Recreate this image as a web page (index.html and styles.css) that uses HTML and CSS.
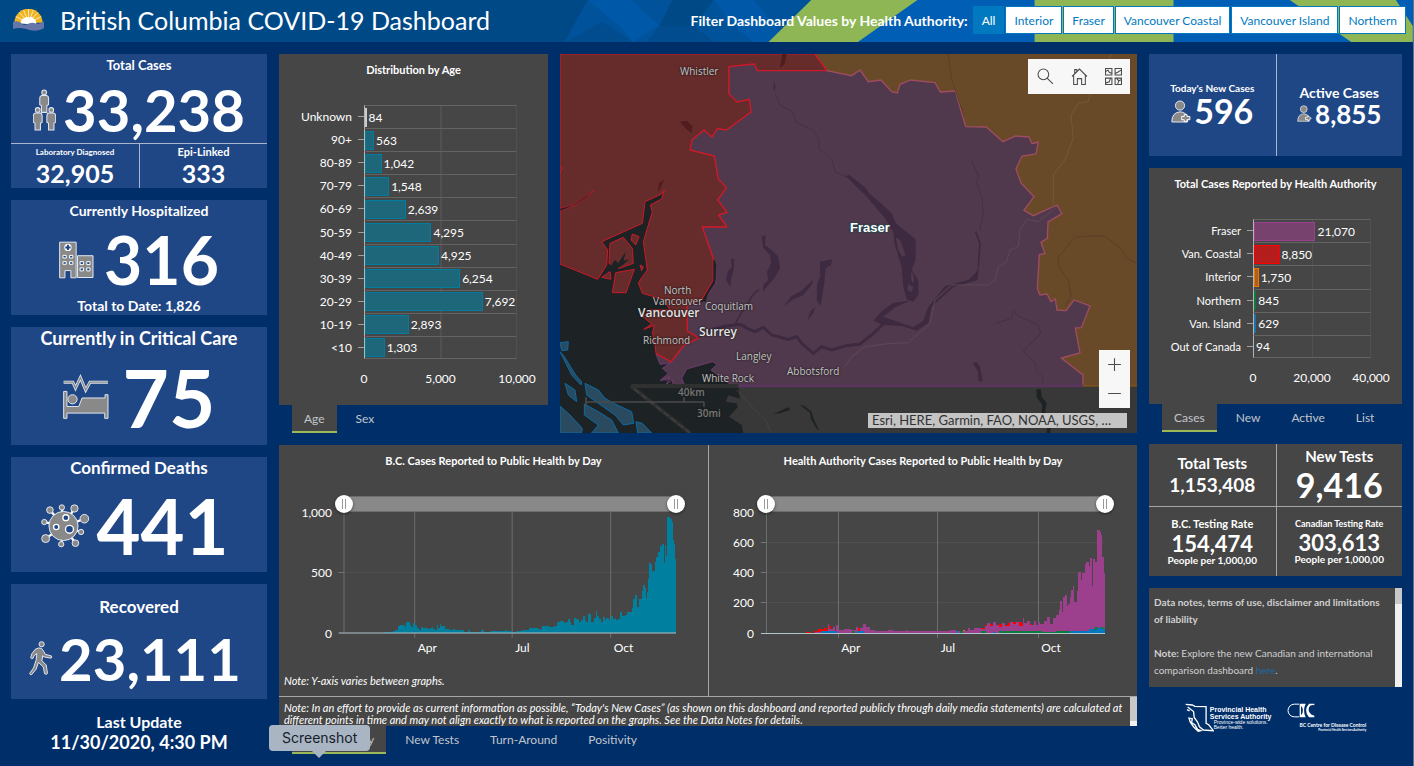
FILE: index.html
```html
<!DOCTYPE html>
<html lang="en">
<head>
    <meta charset="UTF-8">
    <meta name="viewport" content="width=device-width, initial-scale=1.0">
    <title>British Columbia COVID-19 Dashboard</title>
    <link rel="stylesheet" href="styles.css">
</head>
<body>
    <header class="header">
        <svg class="header-bg" viewBox="0 0 854 42" preserveAspectRatio="none">
            <rect width="854" height="42" fill="#005eb5"/>
            <polygon points="0,0 23,0 0,42" fill="#004987"/>
            <polygon points="23,0 248,0 205,42 0,42" fill="#00529b"/>
            <polygon points="23,0 67,0 95,26 68,42 55,26" fill="#0059a8"/>
            <polygon points="0,42 38,22 68,42" fill="#004c8e"/>
            <polygon points="108,0 150,0 130,26 95,26" fill="#004987"/>
            <polygon points="150,0 190,0 225,42 190,42 170,26" fill="#0059a8"/>
            <polygon points="95,26 130,26 150,42 82,42" fill="#004c8e"/>
            <polygon points="248,0 355,0 295,42 205,42" fill="#8eb654"/>
            <rect x="473" width="140" height="42" fill="#8eb654"/>
            <polygon points="730,0 837,0 854,26 854,42 792,42" fill="#8eb654"/>
        </svg>
        <svg class="header-logo" viewBox="0 0 90 64">
            <path d="M4 40A41 41 0 0 1 86 40Z" fill="#f0b41e"/>
            <g stroke="#fff" stroke-width="2">
                <path d="M45 40L8 22M45 40L18 10M45 40L31 3M45 40L45 0M45 40L59 3M45 40L72 10M45 40L82 22"/>
            </g>
            <path d="M22 42Q24 28 32 27Q38 20 46 25Q56 20 60 28Q68 30 68 46Z" fill="#fff"/>
            <path d="M0 38Q14 32 24 42Q34 50 46 42Q56 38 66 42Q76 46 90 36V56Q70 68 46 60Q22 52 0 58Z" fill="#6676a8"/>
        </svg>
        <h1>British Columbia COVID-19 Dashboard</h1>
        <div class="filter">
            <span class="filter-label">Filter Dashboard Values by Health Authority:</span>
            <button class="filter-btn active">All</button>
            <button class="filter-btn">Interior</button>
            <button class="filter-btn">Fraser</button>
            <button class="filter-btn">Vancouver Coastal</button>
            <button class="filter-btn">Vancouver Island</button>
            <button class="filter-btn">Northern</button>
        </div>
    </header>

    <main class="dashboard">
        <!-- Left column -->
        <section class="column">
            <div class="card total">
                <div class="total-top">
                    <h2 class="size-13">Total Cases</h2>
                    <div class="value size-58">
                        <svg class="icon-people" viewBox="0 0 68 124">
                            <defs>
                                <g id="person">
                                    <path d="M-7 17H7Q13 18 13 26V44L8 47V67H-8V47L-13 44V26Q-13 18 -7 17Z"/>
                                    <circle cx="0" cy="8" r="7"/>
                                </g>
                            </defs>
                            <g class="pictogram">
                                <use href="#person" x="33" y="2"/>
                                <use href="#person" x="14" y="54"/>
                                <use href="#person" x="54" y="54"/>
                            </g>
                        </svg>
                        <span>33,238</span>
                    </div>
                </div>
                <div class="total-split">
                    <div>
                        <h3 class="size-8">Laboratory Diagnosed</h3>
                        <p class="size-25">32,905</p>
                    </div>
                    <div>
                        <h3 class="size-11">Epi-Linked</h3>
                        <p class="size-25">333</p>
                    </div>
                </div>
            </div>

            <div class="card hospital">
                <h2 class="size-14">Currently Hospitalized</h2>
                <div class="value size-66">
                    <svg class="icon-hospital" viewBox="0 0 106 112">
                        <path class="pictogram" d="M2 2H52V110H36V88H18V110H2ZM56 43H103V109H56Z"/>
                        <circle cx="27" cy="18" r="11" fill="#fff"/>
                        <path d="M24 10H30V15H35V21H30V26H24V21H19V15H24Z" fill="#1f4786"/>
                        <g fill="#1f4786" stroke="#fff" stroke-width="3">
                            <path d="M12 42h10v8h-10zM32 42h10v8h-10zM12 61h10v8h-10zM32 61h10v8h-10zM64 61h10v9h-10zM84 61h10v9h-10zM64 80h10v9h-10zM84 80h10v9h-10z"/>
                        </g>
                    </svg>
                    <span>316</span>
                </div>
                <p class="card-foot size-14">Total to Date: 1,826</p>
            </div>

            <div class="card critical">
                <h2 class="size-18">Currently in Critical Care</h2>
                <div class="value size-80">
                    <svg class="icon-bed" viewBox="0 0 140 138">
                        <path d="M2 24H30L38 42L53 10L69 48L82 24H137" fill="none" stroke="#dfe5ee" stroke-width="9"/>
                        <path d="M2 24H30L38 42L53 10L69 48L82 24H137" fill="none" stroke="#898989" stroke-width="4"/>
                        <path class="pictogram" d="M2 52H12V98H48L58 72H128V62H137V134H127V118H12V134H2Z"/>
                        <circle class="pictogram" cx="29" cy="76" r="14"/>
                    </svg>
                    <span>75</span>
                </div>
            </div>

            <div class="card deaths">
                <h2 class="size-17">Confirmed Deaths</h2>
                <div class="value size-76">
                    <svg class="icon-virus" viewBox="0 0 148 132">
                        <g stroke="#fff" stroke-width="7">
                            <path d="M68 66L63 10M68 66L100 14M68 66L130 45M68 66L120 84M68 66L104 118M68 66L62 120M68 66L14 104M68 66L10 54M68 66L27 18"/>
                        </g>
                        <g class="pictogram">
                            <circle cx="27" cy="18" r="10"/><circle cx="63" cy="10" r="8"/><circle cx="101" cy="13" r="11"/>
                            <circle cx="131" cy="44" r="13"/><circle cx="121" cy="84" r="8"/><circle cx="104" cy="118" r="10"/>
                            <circle cx="61" cy="121" r="8"/><circle cx="14" cy="104" r="12"/><circle cx="10" cy="54" r="8"/>
                            <circle cx="68" cy="66" r="44"/>
                        </g>
                        <g fill="#1f4786" stroke="#fff" stroke-width="4">
                            <circle cx="75" cy="41" r="9"/><circle cx="46" cy="69" r="8"/><circle cx="86" cy="76" r="12"/>
                        </g>
                    </svg>
                    <span>441</span>
                </div>
            </div>

            <div class="card recovered">
                <h2 class="size-17">Recovered</h2>
                <div class="value size-58">
                    <svg class="icon-walk" viewBox="0 0 74 110">
                        <circle class="pictogram" cx="39" cy="11" r="8"/>
                        <path class="pictogram" d="M20 26Q30 20 39 24Q46 32 50 42L69 47Q72 51 68 54L46 50L42 46L40 62L53 75L57 101Q54 106 48 102L44 81L29 67L22 88L8 105Q3 106 2 101L14 84L22 60L24 40L16 46L12 55Q7 57 5 53L9 40Z"/>
                    </svg>
                    <span>23,111</span>
                </div>
            </div>

            <div class="last-update">
                <h3>Last Update</h3>
                <p>11/30/2020, 4:30 PM</p>
            </div>
        </section>

        <!-- Middle column -->
        <section class="column">
            <div class="middle-top">
                <div class="tabbed age">
                    <div class="panel">
                        <h2>Distribution by Age</h2>
                        <div class="bar-chart teal">
                            <div class="bars">
                                <div class="row"><span class="cat">Unknown</span><div class="track"><i class="pale" style="width: 1%"></i><b>84</b></div></div>
                                <div class="row"><span class="cat">90+</span><div class="track"><i style="width: 6%"></i><b>563</b></div></div>
                                <div class="row"><span class="cat">80-89</span><div class="track"><i style="width: 11%"></i><b>1,042</b></div></div>
                                <div class="row"><span class="cat">70-79</span><div class="track"><i style="width: 16%"></i><b>1,548</b></div></div>
                                <div class="row"><span class="cat">60-69</span><div class="track"><i style="width: 27%"></i><b>2,639</b></div></div>
                                <div class="row"><span class="cat">50-59</span><div class="track"><i style="width: 44%"></i><b>4,295</b></div></div>
                                <div class="row"><span class="cat">40-49</span><div class="track"><i style="width: 49%"></i><b>4,925</b></div></div>
                                <div class="row"><span class="cat">30-39</span><div class="track"><i style="width: 63%"></i><b>6,254</b></div></div>
                                <div class="row"><span class="cat">20-29</span><div class="track"><i style="width: 78%"></i><b>7,692</b></div></div>
                                <div class="row"><span class="cat">10-19</span><div class="track"><i style="width: 29%"></i><b>2,893</b></div></div>
                                <div class="row"><span class="cat">&lt;10</span><div class="track"><i style="width: 13%"></i><b>1,303</b></div></div>
                            </div>
                            <div class="x-axis"><span>0</span><span>5,000</span><span>10,000</span></div>
                        </div>
                    </div>
                    <nav class="tabs">
                        <button class="active">Age</button>
                        <button>Sex</button>
                    </nav>
                </div>

                <div class="map">
                    <svg class="map-canvas" viewBox="15 12 1731 1137" preserveAspectRatio="xMidYMid slice">
                        <rect x="15" y="12" width="1731" height="1137" fill="#1d2224"/>
                        <path d="M780 12H1746V1008H1000Z" fill="#684a29"/>
                        <path d="M550 1010H1746V1149H565L560 1125L522 1100L548 1072L545 1060L512 1055L520 1036L555 1046Z" fill="#373837"/>
                        <path class="coastal" d="M15 12H780L815 62H607L598 42L522 50V132L546 156L583 148L588 186L514 240L487 236L471 261L447 240L411 270L405 300L478 318L490 387L514 413L488 450L516 487L491 495L516 531H442L475 625V692L440 750L397 768V843L433 864L388 885L348 936L303 910L300 882L292 850L298 826L266 838L290 822L264 800L285 780L345 780L325 748L262 730L250 698L277 660L265 575L292 485L286 465L320 447L328 420L320 432L270 455L262 520L140 575L158 600L155 645L128 688L15 642Z"/>
                        <path class="coastal" d="M165 580L205 562L232 595L235 640L192 655L162 640ZM182 668L238 658L213 728H172ZM232 552L252 560L242 585L228 570ZM255 645L265 650L260 662ZM140 682L165 665L168 688Z"/>
                        <path d="M165 650L180 630L190 640L212 605L206 632L222 628L200 648L170 662Z" fill="#1d2224"/>
                        <path d="M15 475L55 465L118 420L95 442L60 466L15 484Z" fill="#1d2224" stroke="#cc1a28" stroke-width="2"/>
                        <path d="M12 350L20 352L15 372" class="coastal"/>
                        <path d="M522 50L598 42L607 62H815L890 77L915 60L940 95L978 90L1010 125L1027 129L1035 103L1067 90L1140 98L1156 126L1201 123L1232 230L1294 231L1344 275L1382 258L1422 261L1431 281L1450 276L1443 312L1401 318L1383 357L1398 399L1437 440L1407 481L1435 497L1506 465L1521 491L1479 516L1477 565L1458 577L1470 611L1453 614L1447 716L1455 735L1476 732L1488 755L1501 747L1506 780L1533 782L1557 750L1605 768L1579 833L1561 834L1575 909L1519 924L1584 975V1008H535L515 995L468 960L487 943L472 935L395 957L380 985L390 1008H355L352 990L315 992L340 970L322 955L345 940L315 943L303 912L348 936L388 885L433 864L397 843V768L445 755L482 700L484 645L442 531H516L491 495L516 487L488 450L514 413L490 387L478 318L405 300L411 270L447 240L471 261L487 236L514 240L588 186L583 148L546 156L522 132Z" fill="#51394d"/>
                        <path d="M397 843V768M516 531H442L475 625V692L440 750M516 531L491 495L516 487L488 450L514 413L490 387L478 318L405 300L411 270L447 240L471 261L487 236L514 240L588 186L583 148L546 156L522 132V50L598 42L607 62H815L780 12M397 843L433 864L388 885L348 936L303 910" fill="none" stroke="#cc1a28" stroke-width="4"/>
                        <path d="M815 62L890 77L915 60L940 95L978 90L1010 125L1027 129L1035 103L1067 90L1140 98L1156 126L1201 123L1232 230L1294 231L1344 275L1382 258L1422 261L1431 281L1450 276L1443 312L1401 318L1383 357L1398 399L1437 440L1407 481L1435 497L1506 465L1521 491L1479 516L1477 565L1458 577L1470 611L1453 614L1447 716L1455 735L1476 732L1488 755L1501 747L1506 780L1533 782L1557 750L1605 768L1579 833L1561 834L1575 909L1519 924L1584 975V1008" fill="none" stroke="#a04c60" stroke-width="4"/>
                        <path d="M535 1008L515 995L468 960L487 943L472 935L395 957L380 985L390 1008H355L352 990L335 1002L345 980L315 992L340 970L322 955L345 940L315 943L303 912M484 645L482 700L445 755" fill="none" stroke="#6d3a70" stroke-width="3"/>
                        <path d="M475 628L484 645L482 690L462 720L452 755L440 752L475 692Z" fill="#1d2224"/>
                        <!-- lakes and rivers -->
                        <g fill="#3d2a40">
                            <path d="M872 378L882 374L930 412L945 432L980 462L1010 490L1022 520L1082 568L1082 630L1070 660L1090 690V735L1075 755L1055 748L1045 710L1040 650L1018 580L1015 545L990 505L960 470L935 440Z"/>
                            <path d="M620 560L632 555L630 585L650 600L670 620L675 655L658 685L640 705L625 725L625 705L640 690L636 665L648 640L645 615L625 595Z"/>
                            <path d="M795 635L832 628L828 645L812 655L808 700L802 735L797 768L785 750L786 705L795 680Z"/>
                            <path d="M528 625L538 628L536 660L528 690L527 712L513 690L518 665L530 650Z"/>
                            <path d="M686 768L710 738L740 722L775 688L770 705L745 735L715 748ZM757 812L765 785L780 772L775 790Z"/>
                            <path d="M955 812L978 785L1015 758L1065 752L1020 772L985 800L1040 820L1075 832L1105 812L1120 770L1170 708L1240 690L1262 668L1272 650L1268 690L1195 712L1150 752L1130 770L1120 820L1085 842L1040 828L985 825Z"/>
                            <path d="M1252 938L1265 936L1275 950L1283 992L1272 996L1268 962ZM656 92L662 110L656 125Z"/>
                        </g>
                        <path d="M375 215L395 212L412 228L410 250L395 238ZM682 12L695 12L690 40L675 55ZM308 430L312 400L328 388L318 410Z" fill="#4f1d1f"/>
                        <path d="M430 862Q470 830 540 825Q560 820 575 835L600 845L625 832L650 855L700 868L725 860L740 880L775 910L800 890L830 900L870 888L915 882L955 850L985 822" fill="none" stroke="#3d2a40" stroke-width="9"/>
                        <path d="M575 780Q580 740 612 718M540 825Q555 790 580 760M1262 545L1275 580L1270 650" fill="none" stroke="#3d2a40" stroke-width="5"/>
                        <path d="M1022 562L1035 570L1052 615L1042 620L1030 600ZM1070 660L1078 690L1072 700L1068 680ZM1060 702L1075 712L1070 726L1058 720Z" fill="#51394d"/>
                        <path d="M660 130L675 165L712 185L725 218L775 240L792 270V295L830 330L840 365L875 382M1250 335L1270 375L1265 400L1280 440L1285 485L1275 540M1322 820L1370 805L1375 782L1390 798L1450 825L1457 850L1405 903L1440 940L1445 965L1462 980L1465 1000" fill="none" stroke="#462f46" stroke-width="3"/>
                        <path d="M1506 470L1450 515L1415 508L1395 540L1390 590L1365 600L1355 635L1330 650L1320 690L1300 705L1190 705L1140 750L1125 820L1060 878L990 882L930 890L890 920L870 950" fill="none" stroke="#5f4759" stroke-width="3"/>
                        <path d="M1670 12L1622 100M1605 130L1600 155L1570 160L1548 195L1555 265L1530 330L1495 375V465" fill="none" stroke="#765836" stroke-width="3"/>
                        <path d="M1180 12L1190 90L1228 200M1746 640L1715 625L1700 598L1650 558L1600 558L1560 562L1510 620V650L1540 690L1548 740L1530 770" fill="none" stroke="#5a3f28" stroke-width="3"/>
                        <path d="M530 1008H1584" stroke="#5b3561" stroke-width="7"/>
                        <path d="M1584 1008H1746" stroke="#80541f" stroke-width="5"/>
                        <path d="M228 1008L405 1149M228 1008H550" fill="none" stroke="#303030" stroke-width="12"/>
                        <path d="M238 1018L405 1149" fill="none" stroke="#4b4b4b" stroke-width="3" stroke-dasharray="18 10"/>
                        <path d="M545 1020L600 1080L632 1110L648 1149" fill="none" stroke="#424342" stroke-width="3"/>
                        <path d="M1445 1018L1458 1018L1460 1040L1475 1060L1470 1085L1492 1110L1485 1149L1475 1149L1478 1112L1460 1085L1462 1065L1445 1040ZM735 1065L748 1068L770 1085L775 1105L792 1140L786 1138L768 1108L765 1088ZM655 1092L675 1083L700 1072L705 1080L675 1090Z" fill="#1d2224"/>
                        <g class="island">
                            <path d="M15 878L40 875L38 900L20 902ZM15 905L28 920L62 975L80 995L78 1005L50 975ZM30 1000L60 1020L65 1055L40 1035ZM15 1068L45 1095L82 1135L80 1149H15Z"/>
                            <path d="M90 1000L130 1020L150 1045L180 1062L230 1085L236 1120L205 1125L180 1095L130 1060L95 1035ZM88 1062L130 1085L170 1110L190 1149H110L130 1125L88 1095ZM243 1115L262 1120L290 1149H248Z"/>
                        </g>
                        <path d="M93 1042V1070M93 1056H447M387 1042V1056M447 1056V1070" fill="none" stroke="#4a4a4a" stroke-width="5"/>
                    </svg>

                    <span class="place whistler">Whistler</span>
                    <span class="place north-van">North<br>Vancouver</span>
                    <span class="place city vancouver">Vancouver</span>
                    <span class="place richmond">Richmond</span>
                    <span class="place coquitlam">Coquitlam</span>
                    <span class="place city surrey">Surrey</span>
                    <span class="place langley">Langley</span>
                    <span class="place abbotsford">Abbotsford</span>
                    <span class="place white-rock">White Rock</span>
                    <span class="place scale km">40km</span>
                    <span class="place scale mi">30mi</span>
                    <span class="region-name">Fraser</span>

                    <div class="map-tools">
                        <button aria-label="Search">
                            <svg viewBox="0 0 16 16"><circle cx="6" cy="6" r="5"/><path d="M9.500 9.500L15 15"/></svg>
                        </button>
                        <button aria-label="Default extent">
                            <svg viewBox="0 0 16 16"><path d="M1 8L8 1L15 8M2.500 7V15.500H6V10H10V15.500H13.500V7M3.500 5V1.500H5.500V3"/></svg>
                        </button>
                        <button aria-label="Basemap gallery">
                            <svg viewBox="0 0 16 16"><path d="M.5 .5H6.500V6.500H.5ZM9.500 .5H15.500V6.500H9.500ZM.5 9.500H6.500V15.500H.5ZM9.500 9.500H15.500V15.500H9.500ZM1 3L3 2L4 4L6 5M10 5L12 4L15 2M1 14L4 13L5 10M11 10L13 12L15 11M12 15L13 12"/></svg>
                        </button>
                    </div>
                    <div class="map-zoom">
                        <button aria-label="Zoom in"><svg viewBox="0 0 16 16"><path d="M8 2V14M2 8H14"/></svg></button>
                        <button aria-label="Zoom out"><svg viewBox="0 0 16 16"><path d="M2 8H14"/></svg></button>
                    </div>
                    <div class="attribution">Esri, HERE, Garmin, FAO, NOAA, USGS, …</div>
                </div>
            </div>

            <div class="tabbed daily">
                <div class="panel">
                    <div class="daily-charts">
                        <div class="time-chart">
                            <h2>B.C. Cases Reported to Public Health by Day</h2>
                            <div class="time-grid">
                                <div class="range">
                                    <input type="range" min="0" max="310" value="0" aria-label="First day, B.C. cases">
                                    <input type="range" min="0" max="310" value="310" aria-label="Last day, B.C. cases">
                                </div>
                                <div class="y-axis"><span>1,000</span><span>500</span><span>0</span></div>
                                <svg class="plot" id="bc-plot" viewBox="0 0 310 1000" preserveAspectRatio="none"></svg>
                                <div class="months"><span>Apr</span><span>Jul</span><span>Oct</span></div>
                            </div>
                            <p class="axis-note">Note: Y-axis varies between graphs.</p>
                        </div>
                        <div class="time-chart">
                            <h2>Health Authority Cases Reported to Public Health by Day</h2>
                            <div class="time-grid wide">
                                <div class="range">
                                    <input type="range" min="0" max="310" value="0" aria-label="First day, health authority cases">
                                    <input type="range" min="0" max="310" value="310" aria-label="Last day, health authority cases">
                                </div>
                                <div class="y-axis"><span>800</span><span>600</span><span>400</span><span>200</span><span>0</span></div>
                                <svg class="plot" id="ha-plot" viewBox="0 0 310 800" preserveAspectRatio="none"></svg>
                                <div class="months"><span>Apr</span><span>Jul</span><span>Oct</span></div>
                            </div>
                        </div>
                    </div>
                    <div class="daily-note">
                        <p>Note: In an effort to provide as current information as possible, “Today's New Cases” (as shown on this dashboard and reported publicly through daily media statements) are calculated at different points in time and may not align exactly to what is reported on the graphs. See the Data Notes for details.</p>
                        <div class="scrollbar"><i></i></div>
                    </div>
                </div>
                <nav class="tabs">
                    <button class="active">Cases by Day</button>
                    <button>New Tests</button>
                    <button>Turn-Around</button>
                    <button>Positivity</button>
                    <span class="dock-label">Screenshot</span>
                </nav>
            </div>
        </section>

        <!-- Right column -->
        <section class="column">
            <div class="card today">
                <div>
                    <h3 class="size-10">Today's New Cases</h3>
                    <div class="value size-34">
                        <svg class="icon-new" viewBox="0 0 60 70">
                            <circle class="pictogram" cx="27" cy="17" r="14"/>
                            <path class="pictogram" d="M2 67Q2 38 27 36Q44 37 50 52V67Z"/>
                            <path d="M40 44H48V50H57V60H48V66H40V60H32V50H40Z" fill="#898989" stroke="#fff" stroke-width="3"/>
                        </svg>
                        <span>596</span>
                    </div>
                </div>
                <div>
                    <h3 class="size-14">Active Cases</h3>
                    <div class="value size-26">
                        <svg class="icon-active" viewBox="0 0 60 70">
                            <circle class="pictogram" cx="27" cy="17" r="14"/>
                            <path class="pictogram" d="M2 67Q2 38 27 36Q44 37 50 52V67Z"/>
                            <path d="M34 50H44V44L58 55L44 66V60H34Z" fill="#898989" stroke="#fff" stroke-width="3"/>
                        </svg>
                        <span>8,855</span>
                    </div>
                </div>
            </div>

            <div class="tabbed authority">
                <div class="panel">
                    <h2>Total Cases Reported by Health Authority</h2>
                    <div class="bar-chart">
                        <div class="bars">
                            <div class="row"><span class="cat">Fraser</span><div class="track"><i class="fraser" style="width: 53%"></i><b>21,070</b></div></div>
                            <div class="row"><span class="cat">Van. Coastal</span><div class="track"><i class="van-coastal" style="width: 22%"></i><b>8,850</b></div></div>
                            <div class="row"><span class="cat">Interior</span><div class="track"><i class="interior" style="width: 4%"></i><b>1,750</b></div></div>
                            <div class="row"><span class="cat">Northern</span><div class="track"><i class="northern" style="width: 2%"></i><b>845</b></div></div>
                            <div class="row"><span class="cat">Van. Island</span><div class="track"><i class="van-island" style="width: 2%"></i><b>629</b></div></div>
                            <div class="row"><span class="cat">Out of Canada</span><div class="track"><i class="pale" style="width: 0%"></i><b>94</b></div></div>
                        </div>
                        <div class="x-axis"><span>0</span><span>20,000</span><span>40,000</span></div>
                    </div>
                </div>
                <nav class="tabs">
                    <button class="active">Cases</button>
                    <button>New</button>
                    <button>Active</button>
                    <button>List</button>
                </nav>
            </div>

            <div class="tests">
                <div>
                    <h3 class="size-15">Total Tests</h3>
                    <p class="size-19">1,153,408</p>
                </div>
                <div>
                    <h3 class="size-15">New Tests</h3>
                    <p class="size-34">9,416</p>
                </div>
                <div>
                    <h3 class="size-11">B.C. Testing Rate</h3>
                    <p class="size-22">154,474</p>
                    <p class="size-10">People per 1,000,00</p>
                </div>
                <div>
                    <h3 class="size-9">Canadian Testing Rate</h3>
                    <p class="size-22">303,613</p>
                    <p class="size-10">People per 1,000,00</p>
                </div>
            </div>

            <div class="notes">
                <div class="notes-text">
                    <p><strong>Data notes, terms of use, disclaimer and limitations of liability</strong></p>
                    <p><strong>Note:</strong> Explore the new Canadian and international comparison dashboard <a href="#">here</a>.</p>
                </div>
                <div class="scrollbar"><i></i></div>
            </div>

            <footer class="logos">
                <div class="phsa">
                    <svg viewBox="0 0 88 88">
                        <path d="M2 4L22 6L30 10L64 11V62L72 66L86 84L56 82L44 72L38 58L28 44L26 26L18 20L8 12M12 46L22 48L20 60L30 66L38 80L48 84L40 86L26 72L16 58ZM6 20L14 24" fill="none" stroke="#fff" stroke-width="4"/>
                    </svg>
                    <p>Provincial Health<br>Services Authority<small>Province-wide solutions.<br>Better health.</small></p>
                </div>
                <div class="cdc">
                    <svg viewBox="0 0 84 44">
                        <path d="M36 3H22A19 19 0 0 0 22 41H36" fill="none" stroke="#fff" stroke-width="3"/>
                        <path d="M38 2H56Q46 22 56 42H38Z" fill="#fff"/>
                        <path d="M42 8Q54 22 42 36Z" fill="#002e69"/>
                        <path d="M82 2H66Q48 22 66 42H82V38Q60 30 66 12Q70 4 82 6Z" fill="#fff"/>
                    </svg>
                    <p>BC Centre for Disease Control<small>Provincial Health Services Authority</small></p>
                </div>
            </footer>
        </section>
    </main>
    <script src="script.js"></script>
</body>
</html>
```
FILE: styles.css
```css
* {
    box-sizing: border-box;
}
body {
    margin: 0;
    min-height: 100vh;
    display: flex;
    flex-direction: column;
    font-family: Lato, "Open Sans", sans-serif;
    font-size: 12px;
    color: white;
    background-color: #002e69;
    border-right: 1px solid #5c7699;
}
h1, h2, h3, p {
    margin: 0;
}
button {
    font-family: inherit;
    cursor: pointer;
}

/* Header */
.header {
    position: relative;
    display: flex;
    align-items: center;
    height: 42px;
    padding: 0 7px 2px 13px;
    background-color: #004987;
}
.header-bg {
    position: absolute;
    top: 0;
    right: 0;
    width: 60%;
    height: 100%;
}
.header-logo {
    width: 31px;
    height: 22px;
    margin-right: 16px;
}
.header h1 {
    position: relative;
    font-size: 25px;
    font-weight: 400;
    white-space: nowrap;
}
.filter {
    position: relative;
    display: flex;
    align-items: center;
    gap: 1px;
    margin-left: auto;
    white-space: nowrap;
}
.filter-label {
    margin-right: 4px;
    font-size: 14px;
    font-weight: bold;
}
.filter-btn {
    height: 28px;
    padding: 0 8px;
    border: 1px solid #0079c1;
    background-color: white;
    color: #0079c1;
    font-size: 12px;
}
.filter-btn.active {
    background-color: #0079c1;
    color: white;
}

/* Layout */
.dashboard {
    flex: 1;
    display: grid;
    grid-template-columns: 256fr 858fr 253fr;
    gap: 12px;
    padding: 12px 11px 12px 11px;
}
.column {
    display: flex;
    flex-direction: column;
    gap: 12px;
    min-width: 0;
}

/* Indicator cards */
.card {
    display: flex;
    flex-direction: column;
    background-color: #1f4786;
    text-align: center;
}
.card h2 {
    line-height: 22px;
}
.hospital, .deaths, .recovered {
    flex: 115 1 0;
}
.critical {
    flex: 118 1 0;
}
.recovered h2 {
    padding-top: 12px;
}
.card-foot {
    font-weight: bold;
    line-height: 18px;
}
.value {
    flex: 1;
    display: flex;
    align-items: center;
    justify-content: center;
    gap: 10px;
    font-weight: bold;
    line-height: 1;
}
.size-8 { font-size: 8px; }
.size-9 { font-size: 9px; }
.size-10 { font-size: 10px; }
.size-11 { font-size: 11px; }
.size-13 { font-size: 13px; }
.size-14 { font-size: 14px; }
.size-15 { font-size: 15px; }
.size-17 { font-size: 17px; }
.size-18 { font-size: 18px; }
.size-19 { font-size: 19px; }
.size-22 { font-size: 22px; }
.size-25 { font-size: 25px; }
.size-26 { font-size: 26px; }
.size-34 { font-size: 34px; }
.size-58 { font-size: 58px; }
.size-66 { font-size: 66px; }
.size-76 { font-size: 76px; }
.size-80 { font-size: 80px; }

.pictogram {
    fill: #898989;
    stroke: #e3e8f0;
    stroke-width: 3;
}
.icon-people { width: 23px; height: 42px; }
.icon-hospital { width: 35px; height: 38px; }
.icon-bed { width: 46px; height: 46px; }
.icon-virus { width: 49px; height: 44px; }
.icon-walk { width: 24px; height: 37px; }
.icon-new { width: 20px; height: 23px; }
.icon-active { width: 15px; height: 17px; }

.total {
    flex: 134 1 0;
}
.total-top {
    flex: 1;
    display: flex;
    flex-direction: column;
    border-bottom: 1px solid #a9b6cb;
}
.total .value {
    gap: 7px;
}
.critical .value {
    gap: 14px;
}
.recovered .value, .deaths .value {
    gap: 6px;
    padding-right: 8px;
}
.total-split {
    display: grid;
    grid-template-columns: 1fr 1fr;
    height: 44px;
}
.total-split div + div {
    border-left: 1px solid #a9b6cb;
}
.total-split h3 {
    line-height: 16px;
}
.total-split p {
    font-weight: bold;
    line-height: 26px;
}
.last-update {
    flex: 43 1 0;
    text-align: center;
    font-weight: bold;
    line-height: 21px;
}
.last-update h3 {
    font-size: 16px;
}
.last-update p {
    font-size: 18px;
}

/* Panels with tabs */
.tabbed {
    display: flex;
    flex-direction: column;
}
.panel {
    flex: 1;
    display: flex;
    flex-direction: column;
    background-color: #464646;
}
.panel h2 {
    padding-top: 8px;
    font-size: 11px;
    line-height: 16px;
    text-align: center;
}
.tabs {
    position: relative;
    display: flex;
    gap: 7px;
    padding-left: 13px;
}
.tabs button {
    height: 28px;
    padding: 0 12px;
    border: 0;
    border-bottom: 2px solid transparent;
    background: none;
    color: #c2c6cc;
    font-size: 12px;
}
.tabs .active {
    background-color: #464646;
    border-bottom-color: #9bb958;
}

.middle-top {
    flex: 379 1 0;
    display: grid;
    grid-template-columns: 269fr 577fr;
    gap: 12px;
}
.daily {
    flex: 309 1 0;
}

/* Horizontal bars */
.bar-chart {
    flex: 1;
    display: flex;
    flex-direction: column;
    padding: 27px 31px 17px 0;
}
.bars {
    flex: 1;
    display: flex;
    flex-direction: column;
}
.row {
    flex: 1;
    display: flex;
}
.cat {
    display: flex;
    align-items: center;
    justify-content: flex-end;
    width: 85px;
}
.authority .cat {
    width: 104px;
    font-size: 11px;
}
.cat::after {
    content: "";
    width: 6px;
    margin-left: 6px;
    border-top: 1px solid #a0a0a0;
}
.track {
    flex: 1;
    display: flex;
    align-items: center;
    border-top: 1px solid #636363;
    border-left: 1px solid #b5b5b5;
    background: linear-gradient(to right, transparent 50%, #505050 50%, #505050 51%, transparent 51%);
    border-right: 1px solid #505050;
}
.row:last-child .track {
    border-bottom: 1px solid #636363;
}
.track i {
    flex: none;
    height: 19px;
    background-color: #1e677b;
    border: 1px solid #007d9e;
}
.track b {
    margin-left: 2px;
    font-weight: 400;
}
.track .pale {
    border: 0;
    background-color: #ccc;
}
.track .fraser {
    background-color: #78426f;
    border-color: #9c3f8c;
}
.track .van-coastal {
    background-color: #b51c1c;
    border-color: #f00;
}
.track .interior {
    background-color: #a8621e;
    border-color: #f07800;
}
.track .northern {
    background-color: #107a3c;
    border-color: #107a3c;
}
.track .van-island {
    background-color: #1a72a8;
    border-color: #1a72a8;
}
.x-axis {
    display: flex;
    justify-content: space-between;
    margin-left: 85px;
    padding-top: 11px;
    line-height: 18px;
}
.authority .x-axis {
    margin-left: 104px;
}
.x-axis span {
    display: flex;
    justify-content: center;
    width: 0;
}

/* Map */
.map {
    position: relative;
    overflow: hidden;
    background-color: #1d2224;
}
.map-canvas {
    position: absolute;
    width: 100%;
    height: 100%;
}
.coastal {
    fill: #662b2b;
    stroke: #cc1a28;
    stroke-width: 3;
}
.island {
    fill: #2a4a60;
    stroke: #0a6aa5;
    stroke-width: 3;
}
.place {
    position: absolute;
    font-family: "Open Sans", sans-serif;
    font-size: 10px;
    line-height: 11px;
    text-align: center;
    color: #c4c4c4;
    text-shadow: 0 0 2px #222, 0 0 2px #222;
}
.city {
    font-size: 12px;
    font-weight: 600;
    line-height: 14px;
    color: #e4e4e4;
}
.scale {
    color: #777;
    font-weight: 600;
}
.whistler { left: 120px; top: 12px; }
.north-van { left: 93px; top: 231px; }
.vancouver { left: 78px; top: 252px; }
.richmond { left: 83px; top: 281px; }
.coquitlam { left: 145px; top: 247px; }
.surrey { left: 139px; top: 271px; }
.langley { left: 176px; top: 297px; }
.abbotsford { left: 227px; top: 312px; }
.white-rock { left: 142px; top: 319px; }
.km { left: 118px; top: 333px; }
.mi { left: 137px; top: 354px; }
.region-name {
    position: absolute;
    left: 290px;
    top: 166px;
    font-family: "Liberation Sans", sans-serif;
    font-size: 13px;
    font-weight: bold;
    text-shadow: 0 0 2px #1d4c52, 0 0 2px #1d4c52, 0 0 2px #1d4c52;
}
.map-tools, .map-zoom {
    position: absolute;
    right: 7px;
    display: flex;
    background-color: #f7f7f7;
}
.map-tools {
    top: 5px;
}
.map-zoom {
    bottom: 25px;
    flex-direction: column;
}
.map button {
    display: flex;
    align-items: center;
    justify-content: center;
    width: 34px;
    height: 35px;
    padding: 0;
    border: 0;
    background: none;
}
.map .map-zoom button {
    width: 31px;
    height: 29px;
}
.map button svg {
    width: 17px;
    height: 17px;
    fill: none;
    stroke: #4c4c4c;
    stroke-width: 1;
}
.attribution {
    position: absolute;
    right: 10px;
    bottom: 5px;
    width: 259px;
    padding-left: 4px;
    background-color: #c4c4c4;
    color: #323232;
    font-size: 13px;
    line-height: 15px;
    white-space: nowrap;
}

/* Cases by day */
.daily-charts {
    flex: 1;
    display: grid;
    grid-template-columns: 1fr 1fr;
    border-bottom: 1px solid #a6a6a6;
}
.time-chart {
    display: flex;
    flex-direction: column;
}
.time-chart + .time-chart {
    border-left: 1px solid #a6a6a6;
}
.time-grid {
    display: grid;
    grid-template-columns: 53px 1fr;
    grid-template-rows: 16px 121px 30px;
    column-gap: 12px;
    padding: 27px 32px 0 0;
}
.time-grid.wide {
    grid-template-columns: 45px 1fr;
}
.range {
    grid-column: 2;
    position: relative;
    background-color: #898989;
    border-top: 1px solid #6e6e6e;
    border-bottom: 1px solid #6e6e6e;
}
.range input {
    position: absolute;
    top: -2px;
    left: -9px;
    width: calc(100% + 18px);
    height: 18px;
    margin: 0;
    appearance: none;
    background: none;
    pointer-events: none;
}
.range input::-webkit-slider-thumb {
    appearance: none;
    width: 18px;
    height: 18px;
    border-radius: 50%;
    background: linear-gradient(to right, transparent 7px, #999 7px, #999 8px, transparent 8px, transparent 10px, #999 10px, #999 11px, transparent 11px) center / 18px 10px no-repeat white;
    box-shadow: 0 1px 3px rgba(0, 0, 0, 0.5);
    pointer-events: auto;
}
.y-axis {
    display: flex;
    flex-direction: column;
    justify-content: space-between;
    text-align: right;
}
.y-axis span {
    display: flex;
    align-items: center;
    justify-content: flex-end;
    height: 0;
}
.plot {
    width: 100%;
    height: 100%;
    overflow: visible;
    shape-rendering: crispEdges;
}
.plot path {
    vector-effect: non-scaling-stroke;
}
.months {
    grid-column: 2;
    display: grid;
    grid-template-columns: 66fr 91fr 92fr 61fr;
    line-height: 30px;
}
.months span {
    padding-left: 3px;
}
.months span:first-child {
    grid-column: 2;
}
.axis-note {
    margin: auto 0 8px 5px;
    font-size: 11px;
    font-style: italic;
    line-height: 14px;
}
.daily-note {
    display: flex;
    height: 29px;
    font-size: 11px;
    font-style: italic;
    line-height: 12px;
}
.daily-note p {
    flex: 1;
    padding: 5px 5px 0 5px;
}
.scrollbar {
    width: 7px;
    background-color: #f0f0f0;
}
.scrollbar i {
    display: block;
    height: 24px;
    background-color: #c8c8c8;
}
.dock-label {
    position: absolute;
    left: -10px;
    top: -1px;
    padding: 0 13px;
    border-radius: 4px;
    background-color: #a9b5c2;
    color: #16202c;
    font-family: Inter, sans-serif;
    font-size: 14px;
    line-height: 26px;
}
.dock-label::after {
    content: "";
    position: absolute;
    left: 43px;
    top: 26px;
    border: 7px solid transparent;
    border-top-color: #a9b5c2;
    border-bottom: 0;
}

/* Right column */
.today {
    flex: 102 1 0;
    display: grid;
    grid-template-columns: 1fr 1fr;
}
.today > div {
    display: flex;
    flex-direction: column;
    align-items: center;
    justify-content: center;
    min-width: 0;
}
.today > div + div {
    border-left: 1px solid #a9b6cb;
}
.today .value {
    flex: none;
    gap: 3px;
}
.authority {
    flex: 264 1 0;
}
.tests {
    flex: 132 1 0;
    display: grid;
    grid-template-columns: 1fr 1fr;
    grid-template-rows: 62fr 70fr;
    background-color: #464646;
}
.tests > div {
    display: flex;
    flex-direction: column;
    align-items: center;
    justify-content: center;
    min-width: 0;
    font-weight: bold;
    line-height: 1;
}
.tests > div:nth-child(even) {
    border-left: 1px solid #a6a6a6;
}
.tests > div:nth-child(n+3) {
    border-top: 1px solid #a6a6a6;
}
.tests h3 {
    margin-bottom: 4px;
}
.notes {
    flex: 99 1 0;
    display: flex;
    min-height: 0;
    overflow: hidden;
    background-color: #464646;
    color: #d0d0d0;
    font-size: 10px;
    line-height: 17px;
}
.notes-text {
    flex: 1;
    padding: 6px 4px 0 5px;
}
.notes-text p + p {
    margin-top: 17px;
}
.notes a {
    color: #1a6aa5;
    text-decoration: none;
}
.notes .scrollbar i {
    height: 16px;
}
.logos {
    flex: 55 1 0;
    display: flex;
    justify-content: center;
    gap: 16px;
    font-weight: bold;
    white-space: nowrap;
}
.phsa, .cdc {
    display: flex;
    margin-top: 4px;
}
.phsa svg {
    width: 29px;
    height: 29px;
    margin-right: -4px;
}
.phsa p {
    font-family: "Liberation Sans", sans-serif;
    font-size: 7px;
    line-height: 7px;
    padding-top: 3px;
}
.phsa small {
    display: block;
    padding-left: 4px;
    font-size: 5px;
    font-weight: 400;
    line-height: 5px;
}
.cdc {
    flex-direction: column;
}
.cdc svg {
    width: 28px;
    height: 15px;
}
.cdc p {
    margin-left: 12px;
    padding-top: 4px;
    font-size: 5px;
    line-height: 6px;
    text-align: right;
}
.cdc small {
    display: block;
    font-size: 3px;
    line-height: 5px;
}
```
FILE: script.js
```js
// Each pair is [day, cases]; the value holds until the next pair.
const bcCases = [
    [0, 2], [38, 10], [44, 8], [46, 20], [48, 28], [50, 55], [52, 62], [54, 68], [57, 50], [58, 95], [62, 70],
    [63, 50], [64, 85], [66, 62], [68, 38], [70, 25], [72, 50], [74, 38], [76, 45], [78, 32], [80, 45], [82, 52],
    [83, 36], [85, 22], [87, 68], [88, 45], [90, 76], [91, 60], [94, 36], [99, 26], [102, 36], [104, 22], [110, 28],
    [112, 12], [116, 25], [118, 12], [128, 26], [131, 10], [136, 20], [144, 14], [150, 26], [152, 16], [157, 12],
    [161, 18], [166, 28], [170, 22], [173, 42], [181, 34], [185, 55], [191, 50], [196, 58], [199, 95], [202, 102],
    [205, 82], [207, 95], [209, 118], [211, 88], [212, 62], [215, 128], [217, 115], [219, 90], [221, 106],
    [223, 142], [225, 110], [226, 90], [228, 160], [231, 90], [233, 125], [235, 183], [236, 140], [238, 112],
    [240, 90], [242, 132], [244, 106], [245, 128], [247, 105], [249, 140], [251, 115], [253, 125], [254, 105],
    [256, 118], [258, 176], [260, 138], [262, 152], [264, 176], [269, 205], [270, 282], [272, 312], [274, 218],
    [275, 284], [278, 345], [279, 398], [281, 375], [282, 290], [283, 340], [284, 445], [285, 578], [287, 562],
    [288, 510], [290, 590], [291, 630], [293, 668], [295, 718], [297, 735], [299, 580], [300, 728], [301, 636],
    [302, 958], [304, 945], [306, 915], [307, 770], [308, 732], [309, 612]
];

const fraser = [
    [0, 0], [45, 8], [57, 60], [58, 25], [61, 38], [63, 15], [64, 55], [66, 18], [71, 28], [78, 18], [82, 40],
    [84, 15], [86, 35], [89, 60], [91, 42], [95, 22], [100, 15], [112, 22], [116, 12], [128, 22], [130, 12],
    [157, 12], [168, 20], [174, 14], [185, 36], [187, 22], [190, 34], [197, 24], [200, 44], [202, 66], [205, 46],
    [208, 75], [210, 54], [213, 42], [216, 68], [219, 44], [223, 76], [226, 58], [229, 76], [231, 46], [235, 100],
    [236, 68], [239, 82], [241, 52], [245, 80], [247, 55], [249, 76], [251, 60], [254, 78], [257, 106],
    [260, 62], [262, 102], [265, 122], [268, 155], [269, 214], [271, 142], [272, 240], [273, 254], [275, 180],
    [276, 194], [278, 240], [279, 284], [281, 312], [282, 208], [284, 275], [285, 405], [288, 352], [289, 400],
    [292, 455], [293, 470], [295, 440], [296, 495], [298, 312], [299, 490], [301, 470], [303, 680], [305, 670],
    [306, 650], [307, 500], [309, 396]
];

const coastal = [
    [0, 2], [37, 8], [41, 0], [44, 12], [48, 24], [53, 34], [56, 20], [58, 46], [59, 28], [62, 20], [70, 20],
    [72, 0], [84, 34], [88, 0], [197, 34], [200, 50], [202, 60], [207, 52], [213, 60], [216, 50], [221, 68],
    [225, 76], [229, 70], [234, 62], [240, 58], [243, 0]
];
const interior = [[0, 0], [171, 22], [173, 0], [180, 22], [182, 0]];
const northern = [
    [0, 0], [79, 10], [81, 0], [177, 10], [180, 0], [197, 12], [201, 0], [213, 12], [219, 10], [228, 14],
    [237, 12], [252, 8], [265, 12], [278, 14], [297, 24], [301, 38], [304, 26], [305, 42], [308, 36]
];
const island = [
    [0, 0], [50, 12], [65, 0], [83, 10], [90, 0], [174, 10], [176, 0], [208, 8], [210, 0], [278, 10],
    [288, 16], [295, 24], [299, 20], [303, 34], [307, 24]
];

function stepPath(series, top) {
    let d = `M0 ${top}`;
    series.forEach(([day, value]) => {
        d += `H${day}V${top - value}`;
    });
    return `${d}H310V${top}Z`;
}

function drawPlot(id, top, step, layers) {
    let out = '';
    for (let v = step; v < top; v += step) {
        out += `<path d="M-5 ${top - v}H0" stroke="#777"/><path d="M0 ${top - v}H310" stroke="#4f4f4f"/>`;
    }
    [0, 66, 157, 249].forEach((day) => {
        const end = day ? top * 1.04 : top;
        out += `<path d="M${day} 0V${end}" stroke="#6e6e6e"/>`;
    });
    layers.forEach(([series, color]) => {
        out += `<path d="${stepPath(series, top)}" fill="${color}"/>`;
    });
    out += `<path d="M-5 ${top}H310" stroke="#b0c4cc"/>`;
    document.getElementById(id).innerHTML = out;
}

drawPlot('bc-plot', 1000, 500, [[bcCases, '#007f9f']]);
drawPlot('ha-plot', 800, 200, [
    [coastal, '#ff0000'],
    [interior, '#f07800'],
    [fraser, '#9c3f8c'],
    [northern, '#0b7a3b'],
    [island, '#0079c1']
]);
```
